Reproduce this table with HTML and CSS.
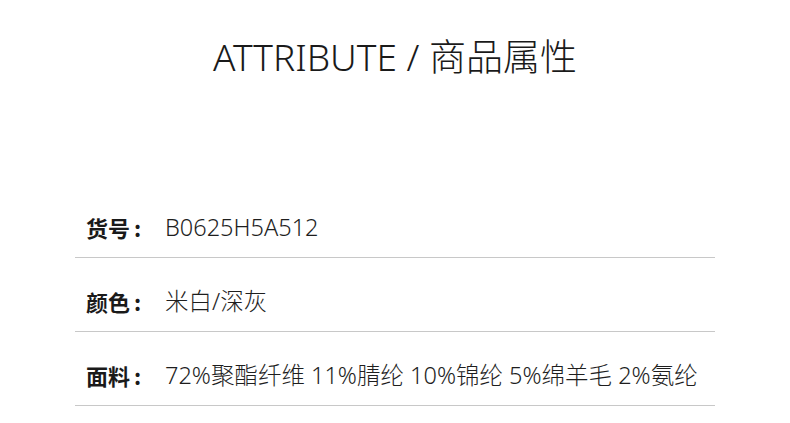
FILE: index.html
```html
<!DOCTYPE html>
<html lang="zh">
<head>
<meta charset="utf-8">
<link rel="stylesheet" href="styles.css">
</head>
<body>
<div class="page">
  <h1 class="title">ATTRIBUTE / 商品属性</h1>
  <div class="list">
    <div class="row"><span class="label">货号<span class="colon">:</span></span><span class="value">B0625H5A512</span></div>
    <div class="row"><span class="label">颜色<span class="colon">:</span></span><span class="value">米白/深灰</span></div>
    <div class="row"><span class="label">面料<span class="colon">:</span></span><span class="value">72%聚酯纤维 11%腈纶 10%锦纶 5%绵羊毛 2%氨纶</span></div>
  </div>
</div>
</body>
</html>
```

FILE: styles.css
```css
html, body {
  margin: 0;
  padding: 0;
  background: #fff;
}
.page {
  width: 790px;
  height: 423px;
  overflow: hidden;
  font-family: "Noto Sans", "Noto Sans CJK SC", sans-serif;
  color: #1a1a1a;
}
.title {
  margin: 0;
  padding-top: 32px;
  text-align: center;
  font-size: 37px;
  font-weight: 300;
  line-height: 50px;
  letter-spacing: 0;
}
.list {
  margin: 102px 75px 0 75px;
}
.row {
  display: flex;
  align-items: flex-end;
  height: 74px;
  border-bottom: 1px solid #c8c8c8;
  padding: 0 0 15px 11px;
  box-sizing: border-box;
  line-height: 30px;
}
.label {
  font-family: "Noto Sans CJK SC", sans-serif;
  font-weight: 700;
  font-size: 22px;
  width: 79px;
  flex: none;
}
.colon {
  margin-left: 4px;
}
.value {
  font-weight: 300;
  font-size: 23.5px;
  color: #1e1e1e;
}
```
